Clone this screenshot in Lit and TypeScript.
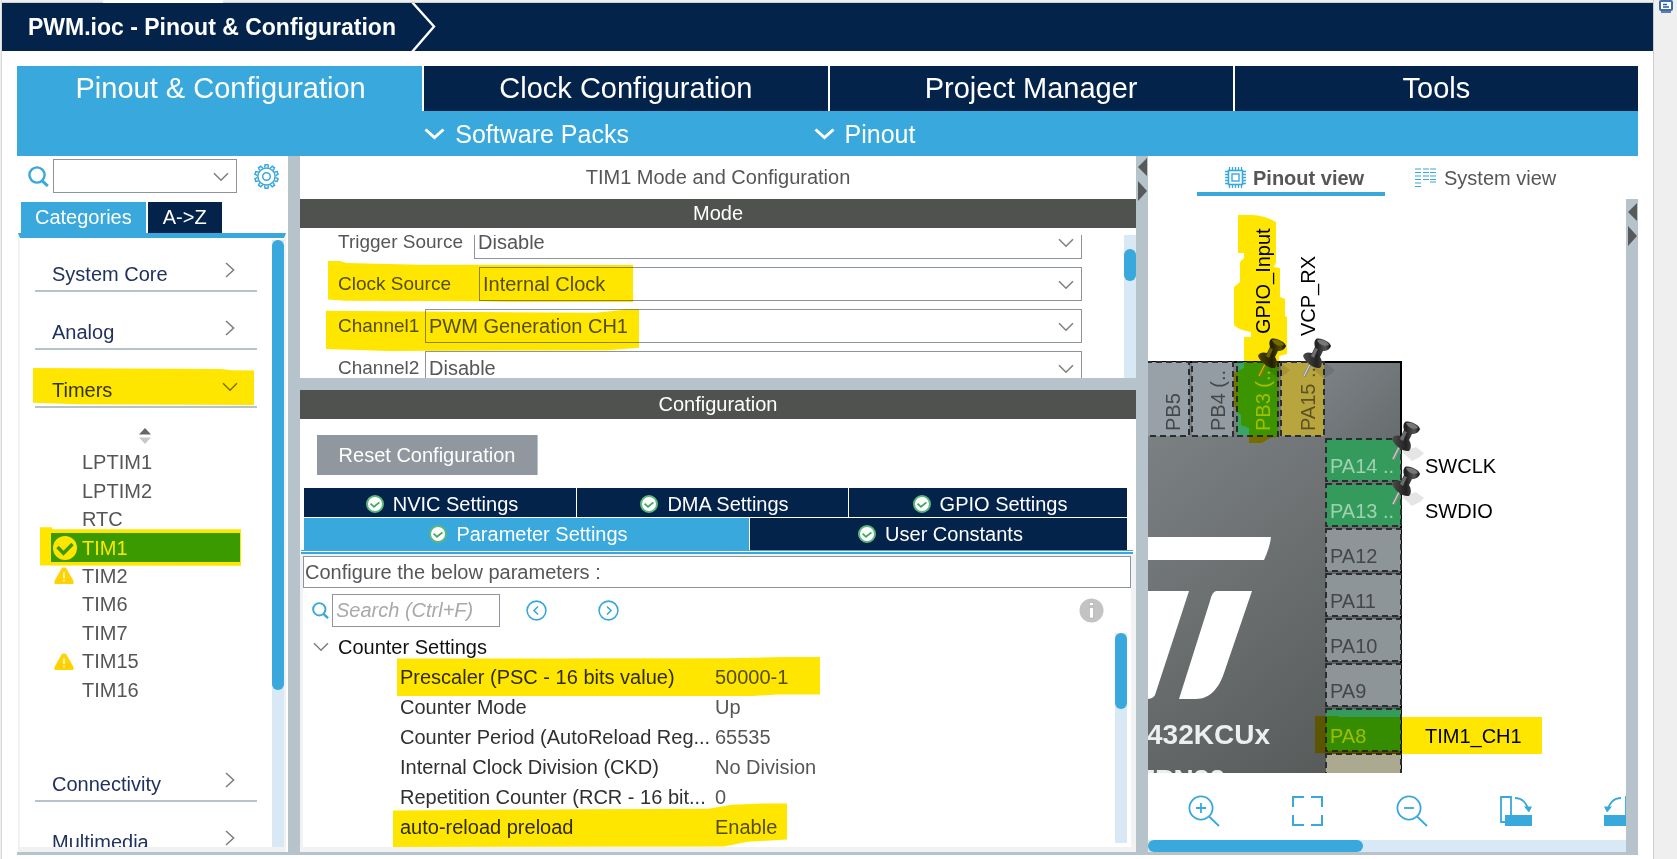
import { LitElement, html, css, svg, nothing } from "lit";
import { customElement, state } from "lit/decorators.js";
import { classMap } from "lit/directives/class-map.js";

const searchIcon = (size: number) => html`<svg class="icon" width=${size} height=${size} viewBox="0 0 21 21" fill="none" stroke="#39a8dc">
  <circle cx="9" cy="9" r="7.6" stroke-width="2.4"/><path d="M14.2 14.8l5.6 5.2" stroke-width="3"/></svg>`;

const chevronDown = html`<svg class="icon" width="16" height="10" viewBox="0 0 16 10" fill="none" stroke="#80807f" stroke-width="1.6"><path d="M1 1.2l7 7 7-7"/></svg>`;
const chevronRight = html`<svg class="icon" width="10" height="16" viewBox="0 0 10 16" fill="none" stroke="#80807f" stroke-width="1.6"><path d="M1 1l7.6 7L1 15"/></svg>`;
const whiteChevron = html`<svg class="icon" width="21" height="12" viewBox="0 0 21 12" fill="none" stroke="#fff" stroke-width="3"><path d="M1.5 1.5l9 8 9-8"/></svg>`;
const okBadge = html`<svg class="icon" width="18" height="18" viewBox="0 0 18 18"><circle cx="9" cy="9" r="8" fill="#fff" stroke="#5cb87c" stroke-width="2"/><path d="M4.6 8.6l3.4 3.2 5.4-4.4" fill="none" stroke="#41a864" stroke-width="1.8"/></svg>`;
const warnIcon = html`<svg class="icon" width="20" height="17" viewBox="0 0 20 17"><path d="M8.4 1h3.2L19 14v3H1v-3z" fill="#ffd200" stroke="#ffd200" stroke-linejoin="round"/><path d="M10 5v6M10 12.5v2" stroke="#fff" stroke-width="1.4"/></svg>`;
const checkIcon = html`<svg class="icon" width="24" height="24" viewBox="0 0 24 24"><circle cx="12" cy="12" r="12" fill="#fff"/><path d="M4.5 11l6 6.2L19.5 8" fill="none" stroke="#3bab64" stroke-width="3.4"/></svg>`;

const gearIcon = () => {
  const teeth = Array.from({ length: 10 }, (_, i) => svg`<path d="M10.6 3.6l.5-2.8h2.8l.5 2.8" transform="rotate(${i * 36} 12.5 12.5)"/>`);
  return html`<svg class="icon" width="25" height="25" viewBox="0 0 25 25" fill="none" stroke="#39a8dc" stroke-width="1.5">${teeth}<circle cx="12.5" cy="12.5" r="8.6"/><circle cx="12.5" cy="12.5" r="3.8"/></svg>`;
};

const splitArrows = html`<svg class="icon" width="11" height="46" viewBox="0 0 11 46" fill="#58595b"><path d="M10 2v18L1 11zM1 25l9 10-9 10z"/></svg>`;

@customElement("app-root")
export class AppRoot extends LitElement {
  @state() private timer = "TIM1";

  static styles = css`
    :host { display: block; font-family: "Liberation Sans", Arial, sans-serif; font-size: 20px; line-height: 28px; color: #555658; }
    * { box-sizing: border-box; }
    button, input, select { font: inherit; color: inherit; border: 0; border-radius: 0; margin: 0; padding: 0; background: none; outline: 0; }
    button { cursor: pointer; }
    .icon { display: block; flex: none; }

    .page { display: grid; grid-template-columns: 2px minmax(0, 1fr) 24px; height: 100vh; min-height: 600px; background: #fff; overflow: hidden; }
    .edge { background: #efefef; border-right: 1px solid #d8d8d8; }
    .dock { background: #efefef; border-left: 1px solid #ccc; padding-left: 5px; }
    .shell { display: flex; flex-direction: column; min-width: 0; min-height: 0; }
    .filetabs { flex: none; height: 3px; background: #efefef; border-bottom: 1px solid #ccd0cf; padding-left: 101px; }
    .filetab { width: 120px; height: 3px; background: #fff; }
    .title { flex: none; display: flex; height: 48px; background: #03234b; color: #fff; padding-left: 26px; gap: 14px; }
    .title h1 { margin: 0; font-size: 23px; line-height: 48px; font-weight: 700; white-space: nowrap; }

    .main { flex: 1; display: flex; flex-direction: column; min-height: 0; margin: 15px 15px 4px; border-bottom: 3px solid #b7c3ca; }
    .tabs { flex: none; display: grid; grid-template-columns: repeat(4, 1fr); }
    .tab { height: 45px; background: #03234b; color: #fff; font-size: 29px; line-height: 45px; text-align: center; border-left: 2px solid #fff; }
    .tab.on { background: #39a8dc; border-left-color: #39a8dc; }
    .sub { flex: none; display: grid; grid-template-columns: repeat(4, 1fr); background: #39a8dc; color: #fff; height: 45px; }
    .sub button { display: flex; align-items: center; gap: 10px; font-size: 25px; text-align: left; padding-left: 2px; }
    .sub .first { grid-column: 2; }
    .sub .second { margin-left: -16px; }

    .panes { flex: 1; min-height: 0; display: grid; grid-template-columns: 271px 12px minmax(0, 836fr) 12px minmax(0, 490fr); }
    .split { background: #b7c3ca; }

    .left { display: flex; flex-direction: column; min-height: 0; }
    .find { flex: none; display: flex; align-items: center; height: 40px; margin-bottom: 3px; padding-left: 11px; }
    .combo { position: relative; display: flex; }
    .combo select { appearance: none; width: 100%; height: 34px; border: 1px solid #8d949b; padding-left: 3px; line-height: 32px; }
    .combo .icon { position: absolute; right: 8px; top: 13px; pointer-events: none; }
    .find .combo { width: 184px; margin: 0 17px 0 4px; }
    .lists { flex: none; display: flex; gap: 2px; padding: 3px 0 0 4px; }
    .lists button { height: 31px; background: #03234b; color: #fff; padding: 0 15px; line-height: 31px; }
    .lists button.on { background: #39a8dc; padding: 0 14px; }
    .listpane { flex: 1; min-height: 0; display: flex; margin: 0 2px 0 1px; border: solid #f0f1f3; border-width: 2px 2px 5px; border-top: 5px solid #39a8dc; padding-top: 2px; }
    .cats { flex: 1; overflow: hidden; padding: 0 15px; display: flex; flex-direction: column; gap: 6px; }
    .cat { position: relative; flex: none; display: flex; align-items: flex-end; justify-content: space-between; width: 100%; height: 52px; padding: 0 22px 2px 17px; border-bottom: 2px solid #b7c3ca; color: #21325f; }
    .cat .icon { margin-bottom: 10px; }
    .cat.open { color: #333a4b; padding-right: 19px; }
    .cat.open .icon { margin-bottom: 12px; }
    .track { flex: none; width: 12px; background: #d8e8f5; }
    .thumb { width: 12px; background: #39a8dc; border-radius: 6px; }
    .left .thumb { height: 75%; max-height: 450px; }
    .timers { flex: none; height: 330px; padding-top: 14px; }
    .sort { display: block; margin: 0 auto 4px 104px; }
    .timers ul { list-style: none; margin: 0; padding: 0 17px; height: 256px; display: grid; grid-template-rows: repeat(9, minmax(0, 1fr)); }
    .timers li { position: relative; display: grid; }
    .timers li button { display: grid; grid-template-columns: 31px auto; align-items: center; text-align: left; margin-left: -1px; }
    .timers li .icon { margin-left: 3px; }
    .timers .sel { background: #3bab64; color: #fff; }
    .timers .sel .icon { margin-left: 2px; }

    .mark { position: absolute; background: #ffe600; mix-blend-mode: multiply; pointer-events: none; z-index: 1; }
    .m-cat { inset: 12px 3px 1px -2px; clip-path: polygon(0 0, 85% 3%, 90% 6%, 100% 7%, 100% 100%, 20% 98%, 0 94%); }
    .m-tim { inset: -6px -1px -4px -12px; clip-path: polygon(0 0, 6% 0, 6% 5%, 100% 5%, 100% 100%, 0 99%); }
    .m-clock { left: -10px; width: 305px; top: -6px; height: 41px; clip-path: polygon(0 0, 4% 0, 6% 5%, 30% 9%, 100% 10%, 100% 100%, 60% 100%, 50% 98%, 6% 97%, 0 94%); }
    .m-chan { left: -12px; width: 313px; top: 0; height: 42px; clip-path: polygon(0 4%, 30% 6%, 86% 9%, 96% 1%, 100% 1%, 100% 92%, 90% 98%, 20% 100%, 0 95%); }
    .m-psc { left: -3px; width: 423px; top: -5px; height: 39px; clip-path: polygon(0 4%, 78% 3%, 92% 0, 100% 0, 100% 96%, 90% 96%, 84% 100%, 0 100%); }
    .m-arp { left: -7px; width: 394px; top: -9px; height: 44px; clip-path: polygon(0 17%, 50% 14%, 80% 13%, 86% 4%, 94% 1%, 100% 1%, 100% 83%, 90% 88%, 84% 99%, 0 100%); }

    .center { display: flex; flex-direction: column; min-height: 0; min-width: 0; }
    .center h2 { flex: none; margin: 0; font-size: 20px; font-weight: 400; line-height: 43px; text-align: center; }
    .center h3 { flex: none; margin: 0; font-size: 20px; font-weight: 400; line-height: 29px; text-align: center; background: #505250; color: #fff; }
    .mode { flex: none; display: flex; height: 143px; margin-top: 7px; }
    .form { flex: 1; overflow: hidden; padding: 0 42px 0 38px; }
    .fields { display: grid; gap: 8px; margin-top: -10px; }
    .field { position: relative; display: flex; }
    .field label { flex: none; width: 87px; font-size: 19px; line-height: 34px; white-space: nowrap; }
    .field.wide label { width: 136px; }
    .field.wider label { width: 141px; }
    .field .combo { flex: 1; }
    .mode .thumb { height: 32px; margin-top: 14px; }
    .hsplit { flex: none; height: 12px; background: #b7c3ca; }
    .reset { flex: none; align-self: flex-start; width: 221px; height: 40px; margin: 16px 0 13px 17px; background: #90979e; color: #fff; border-right: 1px solid #b7c3ca; }
    .ctabs { flex: none; display: grid; gap: 1px; padding: 0 9px 0 4px; }
    .crow { display: grid; grid-template-columns: 272fr 271fr 278fr; gap: 1px; }
    .crow.two { grid-template-columns: 445fr 377fr; }
    .ctab { display: flex; align-items: center; justify-content: center; gap: 9px; height: 29px; background: #03234b; color: #fff; padding: 3px 0 0 4px; }
    .two .ctab { height: 32px; padding-top: 0; }
    .ctab.on { background: #39a8dc; }
    .rule { flex: none; height: 4px; margin: 0 3px 0 1px; border: solid #39a8dc; border-width: 1px 0 2px; }
    .frame { flex: 1; min-height: 0; display: flex; background: #f0f2f3; padding: 2px 5px 5px 3px; }
    .params { flex: 1; min-width: 0; display: flex; flex-direction: column; background: #fff; overflow: hidden; }
    .hint { flex: none; border: 1px solid #8d949b; height: 32px; line-height: 30px; padding-left: 1px; }
    .tools { flex: none; display: flex; align-items: center; height: 44px; padding: 1px 27px 0 9px; }
    .tools input { width: 168px; height: 33px; border: 1px solid #8d949b; padding-left: 3px; margin: 0 26px 0 3px; }
    .tools input::placeholder { color: #a9a9a9; font-style: italic; opacity: 1; }
    .tools .next { margin-left: 51px; }
    .tools .info { margin-left: auto; }
    .scroll { flex: 1; min-height: 0; display: flex; overflow: hidden; padding-right: 4px; }
    .grid { flex: 1; min-width: 0; overflow: hidden; }
    .scroll .track { margin: 1px 0 4px; }
    .scroll .thumb { height: 76px; }
    table { width: 100%; border-collapse: collapse; table-layout: fixed; }
    th, td { height: 30px; padding: 0; font-weight: 400; text-align: left; line-height: 30px; white-space: nowrap; }
    .group { display: flex; align-items: center; gap: 9px; color: #111; padding-left: 10px; }
    .namecol { width: 412px; }
    .name { position: relative; color: #303030; padding-left: 97px; }
    .markbox { position: absolute; left: 97px; top: 0; }

    .right { display: flex; flex-direction: column; min-width: 0; min-height: 0; }
    .views { flex: none; display: flex; height: 43px; padding-left: 49px; gap: 20px; white-space: nowrap; }
    .view { display: flex; align-items: center; gap: 8px; height: 40px; padding: 3px 10px 0; }
    .view.on { font-weight: 700; width: 188px; padding: 7px 0 0 28px; gap: 7px; border-bottom: 4px solid #39a8dc; }
    .canvas { flex: 1; min-height: 0; display: grid; grid-template-columns: minmax(0, 1fr) 12px; }
    .draw { display: flex; flex-direction: column; min-width: 0; min-height: 0; overflow: hidden; }
    .chip { flex: 1; min-height: 0; overflow: hidden; }
    .chip svg { display: block; width: 100%; height: 100%; }
    .zoombar { flex: none; display: flex; gap: 72px; height: 67px; padding: 8px 0 0 40px; overflow: hidden; align-items: center; }
    .zoombar button { flex: none; width: 32px; }
    .hbar { flex: none; height: 12px; background: #d8e8f5; }
    .hbar div { width: 45%; height: 12px; border-radius: 6px; background: #39a8dc; }
    .canvas .split { padding: 2px 0 0 1px; }
    .vsplit { padding: 0 0 0 1px; }
    .ink { mix-blend-mode: multiply; }
  `;

  private field(id: string, label: string, value: string, kind = "", mark = "") {
    return html`<div class="field ${kind}">
      <label for=${id}>${label}</label>
      <div class="combo"><select id=${id}><option>${value}</option></select>${chevronDown}</div>
      ${mark ? html`<span class="mark ${mark}"></span>` : nothing}
    </div>`;
  }

  private category(name: string, open = false) {
    return html`<button class=${classMap({ cat: true, open })} aria-expanded=${open}>${name}${open ? chevronDown : chevronRight}${open ? html`<span class="mark m-cat"></span>` : nothing}</button>`;
  }

  private param(name: string, value: string, mark = "") {
    return html`<tr><th scope="row" class="name">${name}${mark ? html`<div class="markbox"><span class="mark ${mark}"></span></div>` : nothing}</th><td>${value}</td></tr>`;
  }

  private tack(x: number, y: number) {
    return svg`<g transform="translate(${x} ${y})">
      <path d="M10 31l8-3 6-2 8 6-4 4-8 4z" fill="#000" opacity=".1"/>
      <path d="M1 38.5L9 23" stroke="#8a8a8a" stroke-width="3"/><path d="M1 38L8 24" stroke="#ddd" stroke-width="1"/>
      <path d="M0 18c1-4 6-4 9-3l3-6c-1-3-1-6 1-8 5-2 14 3 15 7-1 3-4 5-8 5l-3 6c2 3 3 8 0 11-6 1-14-5-17-12z" fill="url(#metal)"/>
      <path d="M14 2c4-1 10 1 12 5-4 2-10 0-12-5z" fill="#777"/><path d="M12 10l3 1-4 9-3-2z" fill="#999" opacity=".6"/>
    </g>`;
  }

  private chip() {
    const top = [
      { x: -2, w: 43, name: "PB5", fill: "#98a1a8", ink: "#43474a" },
      { x: 44, w: 41, name: "PB4 (..", fill: "#949ca3", ink: "#43474a" },
      { x: 89, w: 41, name: "PB3 (..", fill: "#3ca565", ink: "#a5d4b6" },
      { x: 133, w: 43, name: "PA15 ..", fill: "#b9a53e", ink: "#5a5127" },
    ];
    const side = ["PA14 ..", "PA13 ..", "PA12", "PA11", "PA10", "PA9", "PA8", ""];
    return svg`
      <defs>
        <linearGradient id="body" gradientUnits="userSpaceOnUse" x1="0" y1="200" x2="260" y2="540"><stop offset="0" stop-color="#7e8386"/><stop offset="1" stop-color="#565958"/></linearGradient>
        <linearGradient id="corner" gradientUnits="userSpaceOnUse" x1="176" y1="163" x2="253" y2="240"><stop offset="0" stop-color="#7c8286"/><stop offset="1" stop-color="#676c6e"/></linearGradient>
        <linearGradient id="metal"><stop offset="0" stop-color="#4c4c4c"/><stop offset=".5" stop-color="#222"/><stop offset=".8" stop-color="#555"/><stop offset="1" stop-color="#111"/></linearGradient>
      </defs>
      <rect x="-4" y="163" width="257" height="500" fill="url(#body)"/>
      <rect x="176" y="163" width="77" height="77" fill="url(#corner)"/>
      <path d="M-4 163H253V700" fill="none" stroke="#000" stroke-width="2"/>
      ${top.map((p, i) => svg`
        <rect x=${p.x} y="163" width=${p.w} height="74" fill=${p.fill} stroke="#2b2e30" stroke-width="2" stroke-dasharray="6 4"/>
        <text transform="translate(${32 + i * 45} 232) rotate(-90)" fill=${p.ink}>${p.name}</text>`)}
      ${side.map((name, i) => {
        const green = i < 2 || i === 6;
        return svg`<rect x="178" y=${240 + i * 45} width="75" height="42" fill=${green ? "#359b5d" : i === 7 ? "#aca991" : "#8e9599"} stroke="#2b2e30" stroke-width="2" stroke-dasharray="6 4"/>
          <text x="182" y=${274 + i * 45} fill=${green ? "#a0d1b1" : "#43474a"}>${name}</text>`;
      })}
      <g fill="#fff">
        <path d="M-2 338H123Q122 348 116 361H-2z"/>
        <path d="M-2 392H41L25 441 7 496Q5 500 -2 500z"/>
        <path d="M68 392H104L76 474C71 489 62 500 48 500H31L62 402Q64 393 68 392z"/>
      </g>
      <g font-size="28" font-weight="700" fill="#eceef0" text-anchor="end">
        <text x="122" y="545">432KCUx</text><text x="77" y="590">FPN32</text>
      </g>
      <g fill="#000">
        <text transform="translate(122 135) rotate(-90)">GPIO_Input</text>
        <text transform="translate(167 137) rotate(-90)">VCP_RX</text>
        <text x="277" y="274">SWCLK</text><text x="277" y="319">SWDIO</text><text x="277" y="544">TIM1_CH1</text>
      </g>
      ${this.tack(110, 139)}${this.tack(155, 139)}${this.tack(244, 222)}${this.tack(244, 267)}
      <g class="ink" fill="#ffe600">
        <path d="M90 16H104Q118 17 128 23V63L126 68 132 69V98L137 100V117L139 118V155L131 157 130 238 122 239 114 244H101V229L93 226V216L89 213 86 205V174L96 169V138H103V133Q90 131 86 126V88L92 83V63L96 59V54H90z"/>
        <path d="M167 517H190V518H394V555H200L167 554z"/>
      </g>`;
  }

  render() {
    const timers = ["LPTIM1", "LPTIM2", "RTC", "TIM1", "TIM2", "TIM6", "TIM7", "TIM15", "TIM16"];
    const magnify = (d: string) => html`<svg class="icon" width="32" height="32" viewBox="0 0 32 32" fill="none" stroke="#39a8dc" stroke-width="1.8"><circle cx="13" cy="13" r="11.6"/><path d="M21 21.5L31 31"/><path d=${d}/></svg>`;
    return html`<div class="page">
      <div class="edge"></div>
      <div class="shell">
        <div class="filetabs"><div class="filetab"></div></div>
        <header class="title"><h1>PWM.ioc - Pinout &amp; Configuration</h1>
          <svg class="icon" width="28" height="48" viewBox="0 0 28 48" fill="none" stroke="#fff" stroke-width="2.4"><path d="M2 -1l22 24.5L2 49"/></svg>
        </header>
        <main class="main">
          <nav class="tabs">
            <button class="tab on">Pinout &amp; Configuration</button><button class="tab">Clock Configuration</button><button class="tab">Project Manager</button><button class="tab">Tools</button>
          </nav>
          <div class="sub"><button class="first">${whiteChevron}Software Packs</button><button class="second">${whiteChevron}Pinout</button></div>
          <div class="panes">
            <section class="left">
              <div class="find">${searchIcon(21)}<div class="combo"><select aria-label="Search peripheral"><option></option></select>${chevronDown}</div><button aria-label="Options">${gearIcon()}</button></div>
              <div class="lists"><button class="on">Categories</button><button>A-&gt;Z</button></div>
              <div class="listpane">
                <div class="cats">
                  ${this.category("System Core")}${this.category("Analog")}${this.category("Timers", true)}
                  <div class="timers">
                    <button class="sort" aria-label="Sort"><svg class="icon" width="12" height="16" viewBox="0 0 12 16"><path d="M6 0l6 6.5H0z" fill="#666"/><path d="M0 9.500h12L6 16z" fill="#c8c8c8"/></svg></button>
                    <ul>${timers.map((t) => html`<li>
                      <button class=${this.timer === t ? "sel" : ""} @click=${() => (this.timer = t)}><span>${this.timer === t ? checkIcon : t === "TIM2" || t === "TIM15" ? warnIcon : nothing}</span>${t}</button>
                      ${t === "TIM1" ? html`<span class="mark m-tim"></span>` : nothing}</li>`)}</ul>
                  </div>
                  ${this.category("Connectivity")}${this.category("Multimedia")}
                </div>
                <div class="track"><div class="thumb"></div></div>
              </div>
            </section>
            <div class="split"></div>
            <section class="center">
              <h2>TIM1 Mode and Configuration</h2>
              <h3>Mode</h3>
              <div class="mode">
                <div class="form"><div class="fields">
                  ${this.field("trg", "Trigger Source", "Disable", "wide")}
                  ${this.field("clk", "Clock Source", "Internal Clock", "wider", "m-clock")}
                  ${this.field("ch1", "Channel1", "PWM Generation CH1", "", "m-chan")}
                  ${this.field("ch2", "Channel2", "Disable")}
                </div></div>
                <div class="track"><div class="thumb"></div></div>
              </div>
              <div class="hsplit"></div>
              <h3>Configuration</h3>
              <button class="reset">Reset Configuration</button>
              <div class="ctabs">
                <div class="crow"><button class="ctab">${okBadge}NVIC Settings</button><button class="ctab">${okBadge}DMA Settings</button><button class="ctab">${okBadge}GPIO Settings</button></div>
                <div class="crow two"><button class="ctab on">${okBadge}Parameter Settings</button><button class="ctab">${okBadge}User Constants</button></div>
              </div>
              <div class="rule"></div>
              <div class="frame"><div class="params">
                <div class="hint">Configure the below parameters :</div>
                <div class="tools">${searchIcon(17)}<input type="text" aria-label="Search" placeholder="Search (Ctrl+F)">
                  <button aria-label="Previous"><svg class="icon" width="21" height="21" viewBox="0 0 21 21" fill="none" stroke="#39a8dc" stroke-width="1.6"><circle cx="10.500" cy="10.500" r="9.400"/><path d="M12 6.500l-4 4 4 4"/></svg></button>
                  <button class="next" aria-label="Next"><svg class="icon" width="21" height="21" viewBox="0 0 21 21" fill="none" stroke="#39a8dc" stroke-width="1.6"><circle cx="10.500" cy="10.500" r="9.400"/><path d="M9 6.500l4 4-4 4"/></svg></button>
                  <button class="info" aria-label="Information"><svg class="icon" width="25" height="25" viewBox="0 0 25 25"><circle cx="12.500" cy="12.500" r="12" fill="#c3c3c3"/><path d="M10.500 9.500h4V20h-4zM10.500 4.500h4v3h-4z" fill="#fff" stroke="#aaa" stroke-width=".6"/></svg></button>
                </div>
                <div class="scroll">
                  <div class="grid"><table>
                    <colgroup><col class="namecol"><col></colgroup>
                    <tbody>
                      <tr><th colspan="2" scope="colgroup"><div class="group">${chevronDown}Counter Settings</div></th></tr>
                      ${this.param("Prescaler (PSC - 16 bits value)", "50000-1", "m-psc")}
                      ${this.param("Counter Mode", "Up")}
                      ${this.param("Counter Period (AutoReload Reg...", "65535")}
                      ${this.param("Internal Clock Division (CKD)", "No Division")}
                      ${this.param("Repetition Counter (RCR - 16 bit...", "0")}
                      ${this.param("auto-reload preload", "Enable", "m-arp")}
                    </tbody>
                  </table></div>
                  <div class="track"><div class="thumb"></div></div>
                </div>
              </div></div>
            </section>
            <div class="split vsplit">${splitArrows}</div>
            <section class="right">
              <div class="views">
                <button class="view on"><svg class="icon" width="21" height="21" viewBox="0 0 21 21" fill="none" stroke="#39a8dc"><rect x="3.500" y="3.500" width="14" height="14" stroke-width="1.6"/><rect x="7" y="7" width="7" height="7" stroke-width="1.4"/><path d="M4.500 0v4M7.500 0v4M10.500 0v4M13.500 0v4M16.500 0v4M4.500 17v4M7.500 17v4M10.500 17v4M13.500 17v4M16.500 17v4M0 4.500h4M0 7.500h4M0 10.500h4M0 13.500h4M0 16.500h4M17 4.500h4M17 7.500h4M17 10.500h4M17 13.500h4M17 16.500h4" stroke-width="1.3"/></svg>Pinout view</button>
                <button class="view"><svg class="icon" width="21" height="20" viewBox="0 0 21 20" fill="none" stroke="#39a8dc" stroke-width="1.2"><path d="M0 1h6M0 4.500h6M0 8h6M0 11.500h6M0 15h6M0 18.500h6M8 1h6M8 4.500h6M8 8h6M8 11.500h6M15 1h6M15 4.500h6M15 8h6M15 11.500h6M15 14h6"/></svg>System view</button>
              </div>
              <div class="canvas">
                <div class="draw">
                  <div class="chip"><svg font-size="20">${this.chip()}</svg></div>
                  <div class="zoombar">
                    <button aria-label="Zoom in">${magnify("M8 13h10M13 8v10")}</button>
                    <button aria-label="Fit"><svg class="icon" width="32" height="32" viewBox="0 0 32 32" fill="none" stroke="#39a8dc" stroke-width="2"><path d="M1 12V2h11M19 2h11v10M30 20v10H19M12 30H1V20"/></svg></button>
                    <button aria-label="Zoom out">${magnify("M8 13h10")}</button>
                    <button aria-label="Rotate right"><svg class="icon" width="32" height="32" viewBox="0 0 32 32" fill="none" stroke="#39a8dc" stroke-width="1.800"><path d="M5 27H1V2h10v18M15 3c7 0 12 5 13 12"/><path d="M24 11.500h8l-3 6zM5 20h27v11H5z" fill="#39a8dc" stroke="none"/></svg></button>
                    <button aria-label="Rotate left"><svg class="icon" width="32" height="32" viewBox="0 0 32 32" fill="none" stroke="#39a8dc" stroke-width="1.800"><path d="M27 27h4V2H22v18M17 3C10 3 5 8 4 15"/><path d="M8 11.500H0l3 6zM27 20H0v11h27z" fill="#39a8dc" stroke="none"/></svg></button>
                  </div>
                  <div class="hbar"><div></div></div>
                </div>
                <div class="split">${splitArrows}</div>
              </div>
            </section>
          </div>
        </main>
      </div>
      <aside class="dock"><svg class="icon" width="14" height="13" viewBox="0 0 14 13"><rect x="1" y="1" width="12" height="9" rx="1" fill="#fff" stroke="#3c6cb0" stroke-width="2"/><path d="M4 4.500h4M4 7h6M2 12h10" stroke="#2f5a9c" stroke-width="1.400"/></svg></aside>
    </div>`;
  }
}
